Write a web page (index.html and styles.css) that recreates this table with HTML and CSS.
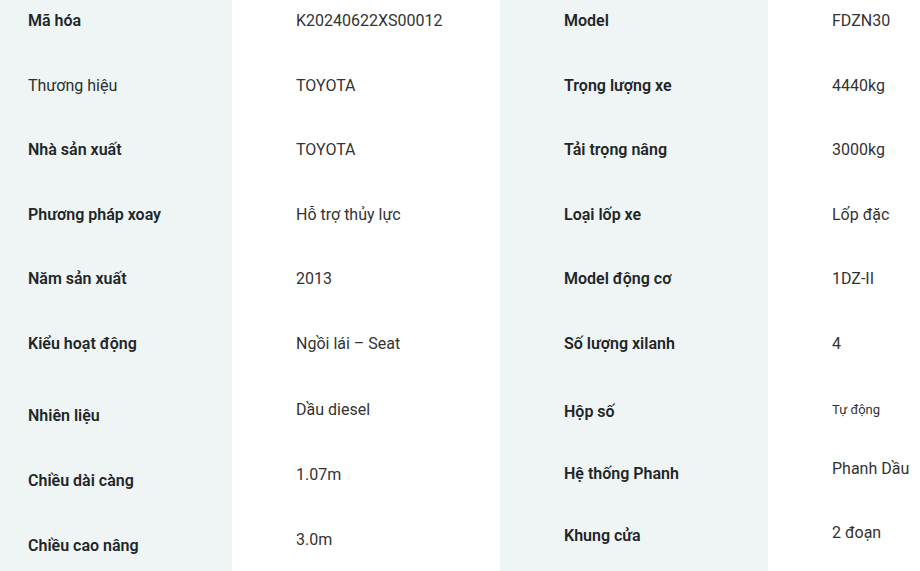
FILE: index.html
```html
<!DOCTYPE html>
<html lang="vi">
<head>
<meta charset="utf-8">
<title>Thông số kỹ thuật</title>
<link rel="stylesheet" href="styles.css">
</head>
<body>
<div class="specs">
  <div class="spec-table">
    <div class="row"><div class="label">Mã hóa</div><div class="value">K20240622XS00012</div></div>
    <div class="row"><div class="label label-light">Thương hiệu</div><div class="value">TOYOTA</div></div>
    <div class="row"><div class="label">Nhà sản xuất</div><div class="value">TOYOTA</div></div>
    <div class="row"><div class="label">Phương pháp xoay</div><div class="value">Hỗ trợ thủy lực</div></div>
    <div class="row"><div class="label">Năm sản xuất</div><div class="value">2013</div></div>
    <div class="row"><div class="label">Kiểu hoạt động</div><div class="value">Ngồi lái – Seat</div></div>
    <div class="row row-left-low"><div class="label">Nhiên liệu</div><div class="value">Dầu diesel</div></div>
    <div class="row row-left-low"><div class="label">Chiều dài càng</div><div class="value">1.07m</div></div>
    <div class="row row-left-low"><div class="label">Chiều cao nâng</div><div class="value">3.0m</div></div>
  </div>
  <div class="spec-table">
    <div class="row"><div class="label">Model</div><div class="value">FDZN30</div></div>
    <div class="row"><div class="label">Trọng lượng xe</div><div class="value">4440kg</div></div>
    <div class="row"><div class="label">Tải trọng nâng</div><div class="value">3000kg</div></div>
    <div class="row"><div class="label">Loại lốp xe</div><div class="value">Lốp đặc</div></div>
    <div class="row"><div class="label">Model động cơ</div><div class="value">1DZ-II</div></div>
    <div class="row"><div class="label">Số lượng xilanh</div><div class="value">4</div></div>
    <div class="row row-right-low"><div class="label">Hộp số</div><div class="value value-small">Tự động</div></div>
    <div class="row row-right-low"><div class="label">Hệ thống Phanh</div><div class="value value-up">Phanh Dầu</div></div>
    <div class="row row-right-low"><div class="label">Khung cửa</div><div class="value">2 đoạn</div></div>
  </div>
</div>
</body>
</html>
```
FILE: styles.css
```css
html, body {
  margin: 0;
  padding: 0;
  background: #ffffff;
  overflow: hidden;
}

body {
  width: 920px;
  height: 571px;
  font-family: Roboto, "Noto Sans", "Liberation Sans", sans-serif;
  font-size: 16px;
  line-height: 24px;
}

.specs {
  display: flex;
  align-items: stretch;
  margin: -11.3px 0 0 -36px;
  width: 1072px;
  height: 600px;
}

.spec-table {
  display: flex;
  flex-direction: column;
  width: 536px;
}

.row {
  display: grid;
  grid-template-columns: 268px 268px;
  height: 64.6px;
  flex: 0 0 auto;
  align-items: stretch;
}

.row:last-child {
  flex-grow: 1;
}

.label,
.value {
  box-sizing: border-box;
  padding: 20.3px 16px 0 64px;
  white-space: nowrap;
}

.label {
  background: #eff4f5;
  color: #1e2629;
  font-weight: 600;
}

.label-light {
  font-weight: 400;
  color: #2a3033;
}

.value {
  background: #ffffff;
  color: #333333;
  font-weight: 400;
}

.row-left-low {
  height: 65px;
}

.row-left-low .label {
  padding-top: 28px;
}

.row-left-low .value {
  padding-top: 21.5px;
}

.row-right-low {
  height: 62px;
}

.row-right-low .label {
  padding-top: 24px;
}

.row-right-low .value {
  padding-top: 20.5px;
}

.row-right-low .value-up {
  padding-top: 18.6px;
}

.row-right-low .value-small {
  font-size: 13px;
  padding-top: 21.6px;
}
```
